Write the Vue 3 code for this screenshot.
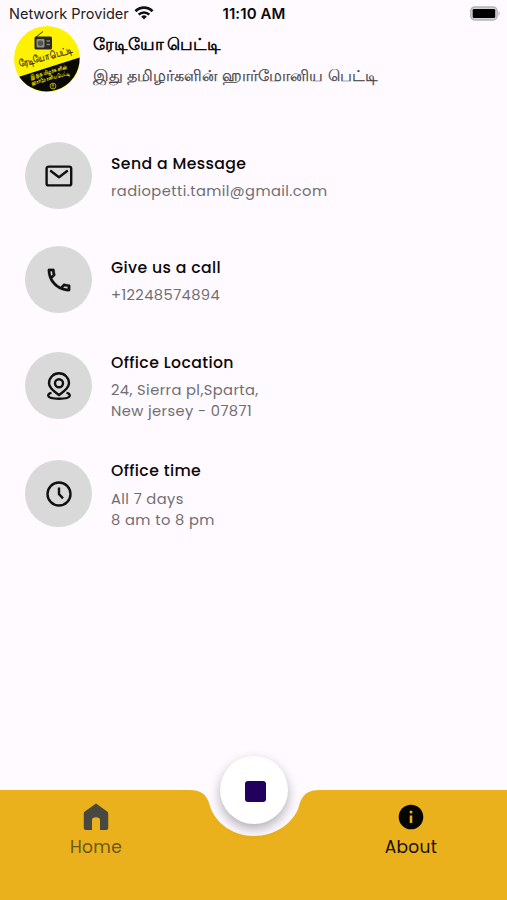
<template>
  <div class="screen">
    <!-- Status bar -->
    <div class="status-bar">
      <div class="network">
        <span class="provider">Network Provider</span>
        <svg class="wifi" viewBox="0 0 20 14">
          <path d="M1.500 5.200 A12 12 0 0 1 18.500 5.200" fill="none" stroke="#111" stroke-width="2.900" />
          <path d="M4.700 8.600 A7.600 7.600 0 0 1 15.300 8.600" fill="none" stroke="#111" stroke-width="2.600" />
          <path d="M10 13.600 L7.200 10.700 A4 4 0 0 1 12.800 10.700 Z" fill="#111" />
        </svg>
      </div>
      <span class="clock">11:10 AM</span>
      <svg class="battery" viewBox="0 0 32 16">
        <rect x="1.700" y="1" width="26.500" height="13" rx="4" fill="#d5d2d5" stroke="#b5b2b5" stroke-width="1.300" />
        <rect x="3.700" y="3" width="22.500" height="9" rx="1.300" fill="#000" />
        <path d="M29.500 5 Q32 7.500 29.500 10 Z" fill="#b5b2b5" />
      </svg>
    </div>

    <!-- Header -->
    <header class="header">
      <svg class="logo" viewBox="0 0 66 66">
        <circle cx="33" cy="33" r="33" fill="#fff200" />
        <path d="M5.200 50.800 L65.600 31.500 A33 33 0 0 1 5.200 50.800 Z" fill="#090905" />
        <path d="M22 11 L29 5.500" stroke="#302e10" stroke-width="1" />
        <rect x="20.500" y="10.500" width="17.500" height="13" rx="1.500" fill="#292923" />
        <rect x="22.500" y="13" width="8" height="8.500" rx="1" fill="#92928b" />
        <circle cx="26.500" cy="17.200" r="2.700" fill="#55554e" />
        <path d="M32.500 15 H36 M32.500 18.500 H36" stroke="#85857e" stroke-width="1.500" />
        <text class="logo-name" transform="translate(6 41) rotate(-15)" textLength="55" lengthAdjust="spacingAndGlyphs">ரேடியோ பெட்டி</text>
        <text class="logo-line" transform="translate(17 52.500) rotate(-15)" textLength="38" lengthAdjust="spacingAndGlyphs">இது தமிழர்களின்</text>
        <text class="logo-line" transform="translate(18 59) rotate(-15)" textLength="40" lengthAdjust="spacingAndGlyphs">ஹார்மோனிய பெட்டி</text>
        <circle cx="39" cy="60" r="2.900" fill="none" stroke="#d9ce10" stroke-width=".8" />
        <path d="M39 58.300 V61.500 M37.800 59 H40.200" stroke="#d9ce10" stroke-width=".8" />
      </svg>
      <div class="titles">
        <h1>ரேடியோ பெட்டி</h1>
        <p>இது தமிழர்களின் ஹார்மோனிய பெட்டி</p>
      </div>
    </header>

    <!-- Contact list -->
    <main class="contacts">
      <div v-for="item in contacts" :key="item.icon" class="contact">
        <div class="badge">
          <svg v-if="item.icon === 'mail'" class="icon" viewBox="0 0 28 28">
            <rect x="1.600" y="4.600" width="24.600" height="18.800" rx="2" />
            <path d="M5.200 8.500 L14 15.300 L22.800 8.500" />
          </svg>
          <svg v-else-if="item.icon === 'phone'" class="icon phone" viewBox="0 0 24 24">
            <path d="M6.540 5c.06.890.210 1.760.450 2.590l-1.200 1.200c-.410-1.200-.670-2.470-.760-3.790h1.510m9.860 12.020c.850.240 1.720.390 2.600.450v1.490c-1.320-.090-2.590-.350-3.800-.750l1.200-1.190M7.500 3H4c-.550 0-1 .450-1 1 0 9.390 7.610 17 17 17 .550 0 1-.450 1-1v-3.490c0-.550-.450-1-1-1-1.240 0-2.450-.200-3.570-.570-.100-.040-.210-.050-.310-.050-.260 0-.510.100-.710.290l-2.200 2.200c-2.830-1.450-5.150-3.760-6.590-6.590l2.200-2.200c.280-.280.360-.670.250-1.020C8.700 6.450 8.500 5.250 8.500 4c0-.550-.450-1-1-1z" />
          </svg>
          <svg v-else-if="item.icon === 'pin'" class="icon" viewBox="0 0 28 28">
            <path d="M14 23 C10.500 20.300 4 16.500 4 11.300 A10 10 0 0 1 24 11.300 C24 16.500 17.500 20.300 14 23 Z" />
            <circle cx="14" cy="11.300" r="4" />
            <path d="M6.500 20.900 C4 21.400 2.900 22.600 3.300 24 C3.900 26 8 26.700 14 26.700 S24.100 26 24.700 24 C25.100 22.600 24 21.400 21.500 20.900" />
          </svg>
          <svg v-else class="icon" viewBox="0 0 28 28">
            <circle cx="14" cy="14" r="11.500" />
            <path d="M14 7.500 V14.200 L18 18.300" />
          </svg>
        </div>
        <div class="details">
          <h2>{{ item.title }}</h2>
          <p v-for="line in item.lines" :key="line">{{ line }}</p>
        </div>
      </div>
    </main>

    <!-- Bottom navigation -->
    <nav class="bottom-nav">
      <svg class="nav-shape" viewBox="0 0 507 110">
        <path d="M0 0 H189 C201 0 207 4 210 16 C215 33 233 46 254 46 S294 33 299 16 C302 4 308 0 320 0 H507 V110 H0 Z" fill="#eab11c" />
      </svg>
      <button class="tab home">
        <svg viewBox="0 0 26 28">
          <path d="M13 1.500 L24.500 9.800 Q25.200 10.400 25.200 11.500 V26 Q25.200 28 23.200 28 H17 V18 Q17 15.200 13 15.200 T9 18 V28 H2.800 Q.8 28 .8 26 V11.500 Q.8 10.400 1.500 9.800 Z" fill="#474840" />
        </svg>
        <span>Home</span>
      </button>
      <button class="tab about">
        <svg viewBox="0 0 26 28">
          <circle cx="13" cy="15" r="12.300" fill="#050500" />
          <path d="M13 13.500 V21" stroke="#eab11c" stroke-width="2.600" />
          <circle cx="13" cy="10" r="1.500" fill="#eab11c" />
        </svg>
        <span>About</span>
      </button>
      <button class="stop" aria-label="Stop"><i></i></button>
    </nav>
  </div>
</template>

<script setup>
import { ref } from "vue";

// Contact details
const contacts = ref([
  { icon: "mail", title: "Send a Message", lines: ["radiopetti.tamil@gmail.com"] },
  { icon: "phone", title: "Give us a call", lines: ["+12248574894"] },
  { icon: "pin", title: "Office Location", lines: ["24, Sierra pl,Sparta,", "New jersey - 07871"] },
  { icon: "time", title: "Office time", lines: ["All 7 days", "8 am to 8 pm"] }
]);
</script>

<style>
body {
  background: #fefaff;
}
</style>

<style scoped>
.screen {
  display: flex;
  flex-direction: column;
  width: 507px;
  height: 900px;
  overflow: hidden;
  background: #fefaff;
  color: #0b090c;
  font-family: Poppins, Inter, sans-serif;
}

h1, h2, p {
  margin: 0;
  white-space: nowrap;
}

.status-bar {
  display: grid;
  grid-template-columns: 1fr auto 1fr;
  align-items: center;
  height: 26px;
  padding: 1px 6px 0 9px;
  box-sizing: border-box;
  font-family: Inter, sans-serif;
  font-size: 14.5px;
}

.network {
  display: flex;
  align-items: center;
  gap: 5px;
}

.provider {
  color: #222;
}

.wifi {
  width: 20px;
  height: 14px;
  margin-bottom: 2px;
}

.clock {
  margin-right: 2px;
  font-size: 15px;
  font-weight: 600;
  letter-spacing: 0.1px;
}

.battery {
  width: 32px;
  height: 16px;
  justify-self: end;
}

.header {
  display: flex;
  gap: 13px;
  height: 66px;
  padding-left: 14px;
}

.logo {
  width: 66px;
  height: 66px;
  overflow: visible;
}

.logo-name {
  font-size: 10px;
  font-weight: 700;
  fill: #33300a;
}

.logo-line {
  font-size: 5.5px;
  font-weight: 700;
  fill: #f5e800;
}

.titles {
  padding-top: 4px;
}

.titles h1 {
  font-size: 16.5px;
  font-weight: 700;
  line-height: 30px;
}

.titles p {
  color: #454246;
  font-size: 15.9px;
  line-height: 31px;
  -webkit-text-stroke: 0.25px #454246;
}

.contacts {
  display: flex;
  flex: 1;
  flex-direction: column;
  gap: 36.7px;
  padding: 50.4px 25.4px 0;
}

.contact {
  display: flex;
  align-items: center;
  gap: 18.6px;
}

.badge {
  display: flex;
  align-items: center;
  justify-content: center;
  width: 67px;
  height: 67px;
  border-radius: 50%;
  background: #d9d9d9;
}

.icon {
  width: 28px;
  height: 28px;
  fill: none;
  stroke: #101010;
  stroke-width: 2.4;
  stroke-linejoin: round;
}

.icon.phone {
  width: 30px;
  height: 30px;
  fill: #101010;
  stroke-width: 0.2;
}

.details {
  margin-bottom: -1.2px;
  padding-top: 1.2px;
}

.details h2 {
  margin-bottom: 5.5px;
  font-size: 15.7px;
  font-weight: 500;
  line-height: 24px;
  letter-spacing: 0.38px;
}

.details p {
  color: #716e72;
  font-size: 14.7px;
  line-height: 21px;
  letter-spacing: 0.4px;
}

.bottom-nav {
  position: relative;
  display: flex;
  justify-content: space-between;
  height: 110px;
  padding: 0 36px;
}

.nav-shape {
  position: absolute;
  inset: 0;
  width: 507px;
  height: 110px;
}

button {
  padding: 0;
  border: 0;
  background: none;
  font: inherit;
}

.tab {
  position: relative;
  display: flex;
  flex-direction: column;
  align-items: center;
  width: 120px;
  height: 80px;
  padding-top: 12px;
  color: #141002;
  font-size: 17px;
}

.tab svg {
  width: 26px;
  height: 28px;
}

.tab span {
  margin-top: 5px;
  line-height: 24px;
  letter-spacing: 0.35px;
}

.home {
  color: #6a581e;
}

.stop {
  position: absolute;
  top: -34px;
  left: 220px;
  display: flex;
  align-items: center;
  justify-content: center;
  width: 68px;
  height: 68px;
  border-radius: 50%;
  background: #fff;
  box-shadow: 0 5px 12px rgba(0, 0, 0, 0.3);
}

.stop i {
  width: 21px;
  height: 21px;
  margin: 2px 0 0 3px;
  border-radius: 3px;
  background: #22005d;
}
</style>
